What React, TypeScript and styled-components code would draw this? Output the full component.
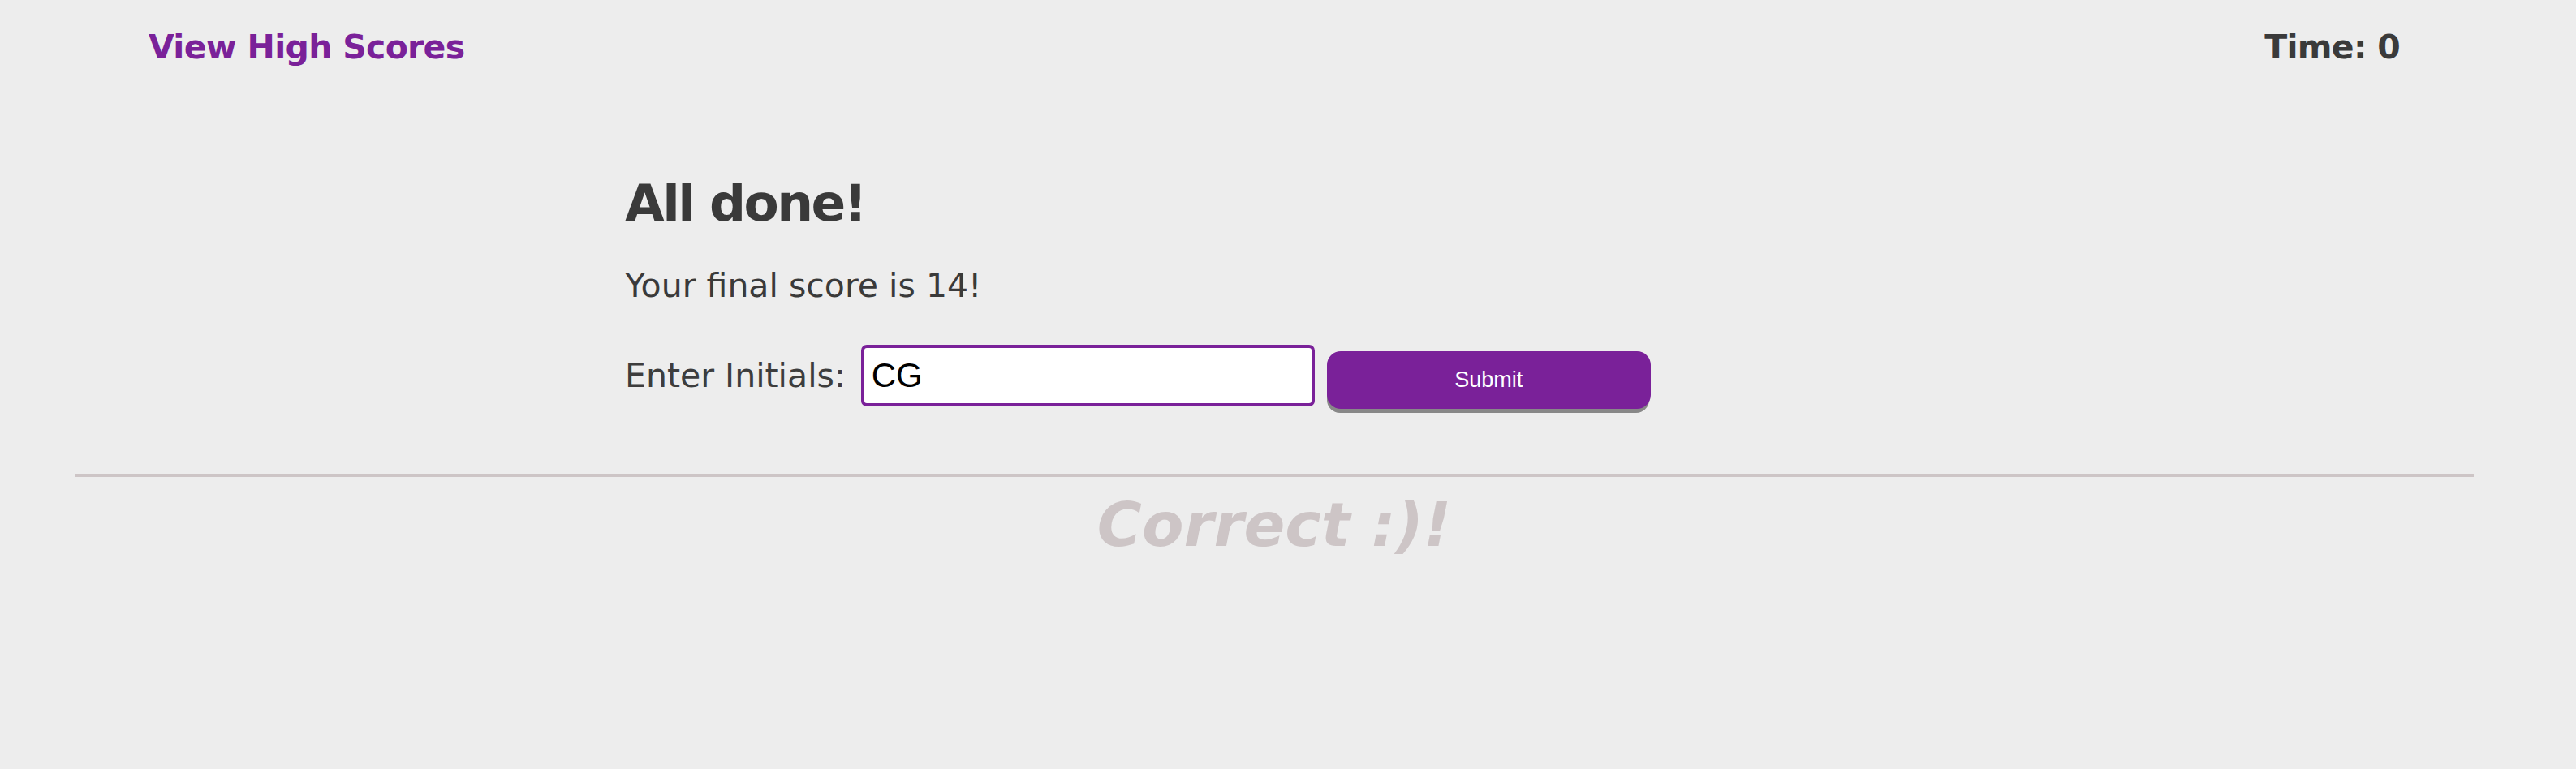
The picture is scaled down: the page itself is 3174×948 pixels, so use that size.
import React from 'react';
import styled, { createGlobalStyle } from 'styled-components';

const purple = '#7a2199';
const ink = '#3a3a3a';

const GlobalStyle = createGlobalStyle`
	html, body {
		margin: 0;
		padding: 0;
		background: #ededed;
		font-family: "DejaVu Sans", Verdana, sans-serif;
		color: ${ink};
	}
`;

const App: React.FC = () => {
	return (
		<>
			<GlobalStyle />
			<Main>
				<Header>
					<HighScoresLink href="#">View High Scores</HighScoresLink>
					<Timer>Time: 0</Timer>
				</Header>

				<Section>
					<Title>All done!</Title>
					<Score>Your final score is 14!</Score>
					<Form onSubmit={(e) => e.preventDefault()}>
						<Label htmlFor="initials">Enter Initials:</Label>
						<Input id="initials" type="text" defaultValue="CG" />
						<SubmitButton type="submit">Submit</SubmitButton>
					</Form>
				</Section>

				<Divider />
				<Feedback>Correct :)!</Feedback>
			</Main>
		</>
	);
};

export default App;

const Main = styled.div`
	margin: 0 126px 0 92px;
`;

const Header = styled.header`
	display: flex;
	justify-content: space-between;
	align-items: baseline;
	padding: 34px 91px 0 91px;
	font-size: 41px;
	line-height: 48px;
	font-weight: bold;
	letter-spacing: -0.7px;
`;

const HighScoresLink = styled.a`
	color: ${purple};
	text-decoration: none;
`;

const Timer = styled.div`
	color: ${ink};
`;

const Section = styled.section`
	margin: 132px 0 0 678px;
`;

const Title = styled.h1`
	margin: 0;
	font-size: 63px;
	line-height: 74px;
	font-weight: bold;
	letter-spacing: -2.5px;
`;

const Score = styled.p`
	margin: 40px 0 0;
	font-size: 41px;
	line-height: 48px;
`;

const Form = styled.form`
	display: flex;
	align-items: baseline;
	margin: 49px 0 0;
`;

const Label = styled.label`
	font-size: 41px;
	line-height: 48px;
	margin-right: 19px;
	color: #3d3d3d;
`;

const Input = styled.input`
	box-sizing: border-box;
	width: 559px;
	height: 76px;
	padding: 0 0 0 9px;
	border: 4px solid ${purple};
	border-radius: 7px;
	background: #fff;
	color: #000;
	font-family: "Liberation Sans", Arial, sans-serif;
	font-size: 42px;
	outline: none;
`;

const SubmitButton = styled.button`
	box-sizing: border-box;
	width: 399px;
	height: 71px;
	margin-left: 15px;
	border: 0;
	border-radius: 17px;
	background: ${purple};
	color: #fff;
	font-family: "Liberation Sans", Arial, sans-serif;
	font-size: 27px;
	box-shadow: -1px 6px 0 -1px #888;
	cursor: pointer;
`;

const Divider = styled.hr`
	margin: 80px 0 0;
	border: 0;
	height: 4px;
	background: #cdc5c6;
`;

const Feedback = styled.div`
	margin-top: 15px;
	text-align: center;
	font-size: 75px;
	line-height: 88px;
	font-weight: bold;
	font-style: italic;
	color: #cdc5c6;
`;
